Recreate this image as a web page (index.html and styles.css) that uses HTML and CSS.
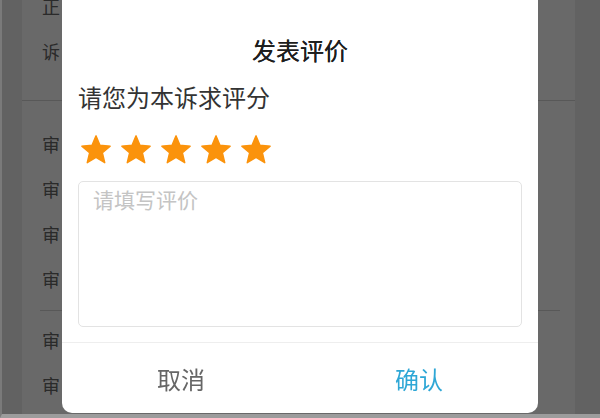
FILE: index.html
```html
<!DOCTYPE html>
<html lang="zh-CN">
<head>
  <meta charset="UTF-8" />
  <meta name="viewport" content="width=device-width, initial-scale=1.0"/>
  <title>发表评价</title>
  <link rel="stylesheet" href="styles.css">
</head>
<body>
  <div class="page">
    <div class="gutter left"></div>
    <div class="content">
      <div class="group first">
        <div class="row">正</div>
        <div class="row">诉</div>
      </div>
      <div class="group second">
        <div class="row">审</div>
        <div class="row">审</div>
        <div class="row">审</div>
        <div class="row">审</div>
      </div>
      <div class="row-line"></div>
      <div class="group third">
        <div class="row">审</div>
        <div class="row">审</div>
      </div>
    </div>
    <div class="gutter right"></div>
  </div>

  <div class="mask"></div>

  <div class="dialog">
    <div class="dialog-body">
      <h2 class="dialog-title">发表评价</h2>
      <p class="rate-label">请您为本诉求评分</p>
      <div class="stars">
        <svg class="star" viewBox="0 0 24 24"><path d="M12 17.27L18.18 21l-1.64-7.03L22 9.24l-7.19-.61L12 2 9.19 8.63 2 9.24l5.46 4.73L5.82 21z"/></svg>
        <svg class="star" viewBox="0 0 24 24"><path d="M12 17.27L18.18 21l-1.64-7.03L22 9.24l-7.19-.61L12 2 9.19 8.63 2 9.24l5.46 4.73L5.82 21z"/></svg>
        <svg class="star" viewBox="0 0 24 24"><path d="M12 17.27L18.18 21l-1.64-7.03L22 9.24l-7.19-.61L12 2 9.19 8.63 2 9.24l5.46 4.73L5.82 21z"/></svg>
        <svg class="star" viewBox="0 0 24 24"><path d="M12 17.27L18.18 21l-1.64-7.03L22 9.24l-7.19-.61L12 2 9.19 8.63 2 9.24l5.46 4.73L5.82 21z"/></svg>
        <svg class="star" viewBox="0 0 24 24"><path d="M12 17.27L18.18 21l-1.64-7.03L22 9.24l-7.19-.61L12 2 9.19 8.63 2 9.24l5.46 4.73L5.82 21z"/></svg>
      </div>
      <textarea class="comment" placeholder="请填写评价"></textarea>
    </div>
    <div class="dialog-footer">
      <button class="btn cancel">取消</button>
      <button class="btn confirm">确认</button>
    </div>
  </div>
</body>
</html>
```

FILE: styles.css
```css
* {
  box-sizing: border-box;
}

body {
  margin: 0;
  font-family: "Noto Sans CJK SC", "Noto Sans", sans-serif;
  overflow: hidden;
}

.page {
  display: flex;
  height: 100vh;
  overflow: hidden;
}

.gutter {
  background: #eeeeee;
}

.gutter.left {
  width: 22px;
}

.gutter.right {
  width: 25px;
}

.content {
  flex: 1;
  background: #fff;
}

.group {
  padding-left: 20px;
}

.row {
  height: 45px;
  line-height: 45px;
  font-size: 18px;
  color: #666;
}

.group.first {
  margin-top: -16px;
  padding-bottom: 26px;
  border-bottom: 1px solid #d6d6d6;
}

.group.second {
  padding-top: 21px;
}

.row-line {
  height: 1px;
  margin: 8px 15px 0 18px;
  background: #d6d6d6;
}

.group.third {
  margin-top: 7px;
}

.mask {
  position: fixed;
  top: 0;
  left: 0;
  right: 0;
  bottom: 0;
  background: rgba(0, 0, 0, 0.59);
  border-left: 2px solid #7a7a7a;
  border-bottom: 4px solid #9c9c9c;
}

.dialog {
  position: fixed;
  top: 0;
  left: 62px;
  width: 476px;
  bottom: 5px;
  background: #fff;
  border-radius: 0 0 10px 10px;
  display: flex;
  flex-direction: column;
}

.dialog-body {
  padding: 0 16px;
}

.dialog-title {
  margin: 32px 0 0;
  height: 36px;
  line-height: 36px;
  text-align: center;
  font-size: 24px;
  font-weight: normal;
  color: #1e1e1e;
  text-shadow: 0 0 0.4px #1e1e1e;
}

.rate-label {
  margin: 13px 0 0;
  height: 32px;
  line-height: 32px;
  font-size: 24px;
  color: #333;
}

.stars {
  display: flex;
  gap: 6px;
  margin: 20px 0 0 1px;
  height: 34px;
}

.star {
  width: 34px;
  height: 34px;
  fill: #fb930c;
  stroke: #fb930c;
  stroke-width: 1;
  stroke-linejoin: round;
}

.comment {
  display: block;
  width: 100%;
  height: 146px;
  margin-top: 14px;
  padding: 5px 14px;
  border: 1px solid #e3e3e3;
  border-radius: 5px;
  resize: none;
  font-family: inherit;
  font-size: 21px;
  line-height: 24px;
  color: #333;
  outline: none;
}

.comment::placeholder {
  color: #c4c4c4;
}

.dialog-footer {
  display: flex;
  margin-top: 15px;
  border-top: 1px solid #eeeeee;
  height: 71px;
}

.btn {
  flex: 1;
  border: none;
  background: none;
  font-family: inherit;
  font-size: 24px;
  padding: 0;
  cursor: pointer;
}

.btn.cancel {
  color: #666;
}

.btn.confirm {
  color: #2ea7d6;
}
```
